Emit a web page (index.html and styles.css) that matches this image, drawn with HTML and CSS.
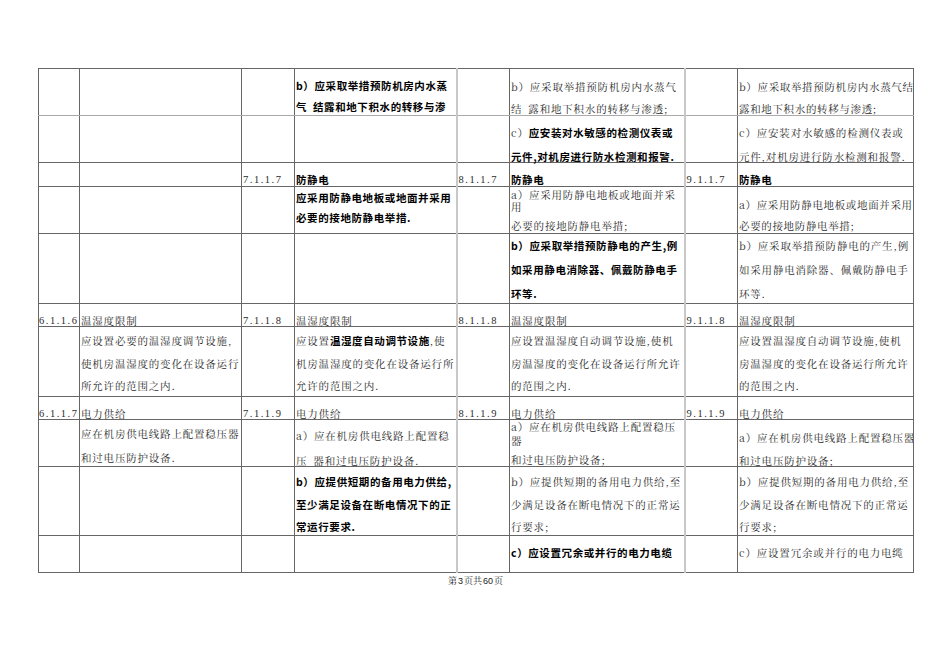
FILE: index.html
```html
<!DOCTYPE html>
<html lang="zh-CN">
<head>
<meta charset="utf-8">
<title>第3页</title>
<link rel="stylesheet" href="styles.css">
</head>
<body>
<div class="page">
  <table class="grid">
    <colgroup>
      <col class="w-num1"><col class="w-txt1"><col class="w-num"><col class="w-txt2"><col class="w-num"><col class="w-txt3"><col class="w-num"><col class="w-txt4">
    </colgroup>
    <tr class="r1">
      <td></td><td></td><td></td>
      <td><div class="c b">b）应采取举措预防机房内水蒸<br>气&ensp;结露和地下积水的转移与渗</div></td>
      <td class="soft"></td>
      <td><div class="c r1b">b）应采取举措预防机房内水蒸气<br>结&ensp;露和地下积水的转移与渗透;</div></td>
      <td class="soft"></td>
      <td><div class="c r1c tightsp">b）应采取举措预防机房内水蒸气结<br>露和地下积水的转移与渗透;</div></td>
    </tr>
    <tr class="r2">
      <td></td><td></td><td></td><td></td>
      <td class="soft"></td>
      <td><div class="c">c）<span class="b">应安装对水敏感的检测仪表或</span><br><span class="b">元件,对机房进行防水检测和报警.</span></div></td>
      <td class="soft"></td>
      <td><div class="c">c）应安装对水敏感的检测仪表或<br>元件,对机房进行防水检测和报警.</div></td>
    </tr>
    <tr class="hd r3">
      <td></td><td></td>
      <td><div class="c n">7.1.1.7</div></td>
      <td><div class="c b">防静电</div></td>
      <td class="soft"><div class="c n">8.1.1.7</div></td>
      <td><div class="c b">防静电</div></td>
      <td class="soft"><div class="c n">9.1.1.7</div></td>
      <td><div class="c b">防静电</div></td>
    </tr>
    <tr class="r4">
      <td></td><td></td><td></td>
      <td><div class="c b">应采用防静电地板或地面并采用<br>必要的接地防静电举措.</div></td>
      <td class="soft"></td>
      <td><div class="c split"><span class="ln l12">a）应采用防静电地板或地面并采</span><span class="ln l12">用</span><span class="ln l26">必要的接地防静电举措;</span></div></td>
      <td class="soft"></td>
      <td><div class="c r4c tightsp">a）应采用防静电地板或地面并采用<br>必要的接地防静电举措;</div></td>
    </tr>
    <tr class="r5">
      <td></td><td></td><td></td><td></td>
      <td class="soft"></td>
      <td><div class="c b">b）应采取举措预防静电的产生,例<br>如采用静电消除器、佩戴防静电手<br>环等.</div></td>
      <td class="soft"></td>
      <td><div class="c">b）应采取举措预防静电的产生,例<br>如采用静电消除器、佩戴防静电手<br>环等.</div></td>
    </tr>
    <tr class="hd r6">
      <td><div class="c n n1">6.1.1.6</div></td>
      <td><div class="c">温湿度限制</div></td>
      <td><div class="c n">7.1.1.8</div></td>
      <td><div class="c">温湿度限制</div></td>
      <td class="soft"><div class="c n">8.1.1.8</div></td>
      <td><div class="c">温湿度限制</div></td>
      <td class="soft"><div class="c n">9.1.1.8</div></td>
      <td><div class="c">温湿度限制</div></td>
    </tr>
    <tr class="r7">
      <td></td>
      <td><div class="c">应设置必要的温湿度调节设施,<br>使机房温湿度的变化在设备运行<br>所允许的范围之内.</div></td>
      <td></td>
      <td><div class="c">应设置<span class="b">温湿度自动调节设施</span>,使<br>机房温湿度的变化在设备运行所<br>允许的范围之内.</div></td>
      <td class="soft"></td>
      <td><div class="c">应设置温湿度自动调节设施,使机<br>房温湿度的变化在设备运行所允许<br>的范围之内.</div></td>
      <td class="soft"></td>
      <td><div class="c">应设置温湿度自动调节设施,使机<br>房温湿度的变化在设备运行所允许<br>的范围之内.</div></td>
    </tr>
    <tr class="hd r8">
      <td><div class="c n n1">6.1.1.7</div></td>
      <td><div class="c">电力供给</div></td>
      <td><div class="c n">7.1.1.9</div></td>
      <td><div class="c">电力供给</div></td>
      <td class="soft"><div class="c n">8.1.1.9</div></td>
      <td><div class="c">电力供给</div></td>
      <td class="soft"><div class="c n">9.1.1.9</div></td>
      <td><div class="c">电力供给</div></td>
    </tr>
    <tr class="r9">
      <td></td>
      <td><div class="c">应在机房供电线路上配置稳压器<br>和过电压防护设备.</div></td>
      <td></td>
      <td><div class="c r9b">a）应在机房供电线路上配置稳<br>压&ensp;器和过电压防护设备.</div></td>
      <td class="soft"></td>
      <td><div class="c split2"><span class="ln l14">a）应在机房供电线路上配置稳压</span><span class="ln l13">器</span><span class="ln l26">和过电压防护设备;</span></div></td>
      <td class="soft"></td>
      <td><div class="c r9d">a）应在机房供电线路上配置稳压器<br>和过电压防护设备;</div></td>
    </tr>
    <tr class="r10">
      <td></td><td></td><td></td>
      <td><div class="c b">b）应提供短期的备用电力供给,<br>至少满足设备在断电情况下的正<br>常运行要求.</div></td>
      <td class="soft"></td>
      <td><div class="c">b）应提供短期的备用电力供给,至<br>少满足设备在断电情况下的正常运<br>行要求;</div></td>
      <td class="soft"></td>
      <td><div class="c">b）应提供短期的备用电力供给,至<br>少满足设备在断电情况下的正常运<br>行要求;</div></td>
    </tr>
    <tr class="r11">
      <td></td><td></td><td></td><td></td>
      <td class="soft"></td>
      <td><div class="c b">c）应设置冗余或并行的电力电缆</div></td>
      <td class="soft"></td>
      <td><div class="c">c）应设置冗余或并行的电力电缆</div></td>
    </tr>
  </table>
  <div class="footer">第<span class="fn">3</span>页共<span class="fn">60</span>页</div>
</div>
</body>
</html>
```

FILE: styles.css
```css
html, body {
  margin: 0;
  padding: 0;
  background: #fff;
}

.page {
  padding: 68px 0 0 38px;
  font-family: "Noto Serif CJK SC", "Noto Sans CJK SC", serif;
  color: #2b2b2b;
}

.grid {
  border-collapse: collapse;
  table-layout: fixed;
  width: 875px;
}

.w-num1 { width: 41px; }
.w-txt1 { width: 162px; }
.w-num { width: 53px; }
.w-txt2 { width: 162px; }
.w-txt3 { width: 175px; }
.w-txt4 { width: 176px; }

.grid td {
  border: 1px solid #666;
  padding: 0;
  vertical-align: top;
}

.grid td.soft {
  border-left: 2px solid #c8c8c8;
}

.r1 td {
  border-bottom-color: #aaa;
}

.c {
  overflow-x: clip;
  overflow-y: visible;
  white-space: nowrap;
  padding-left: 1px;
  font-size: 10.5px;
  font-weight: 400;
  letter-spacing: 0.8px;
  box-sizing: border-box;
}

.c.tightsp {
  letter-spacing: 0.65px;
}

.b {
  font-family: "Noto Sans CJK SC", "Noto Sans", sans-serif;
  font-weight: 700;
  color: #000;
  letter-spacing: 0.6px;
}

.n {
  font-family: "Liberation Serif", serif;
  letter-spacing: 1.5px;
  font-weight: 400;
}

.n1 { padding-left: 0; }

/* row heights and text positions */
.r1 .c { height: 46px; line-height: 21px; padding-top: 6px; }
.r1 .r1b, .r1 .r1c { line-height: 22px; padding-top: 7px; }
.r2 .c { height: 46px; line-height: 24px; padding-top: 5px; }
.hd .c { line-height: 14px; padding-top: 10px; }
.r3 .c { height: 23px; }
.r6 .c, .r8 .c { height: 22px; }
.r4 .c { height: 46px; line-height: 20px; padding-top: 1px; }
.r4 .r4c { line-height: 21px; padding-top: 7px; }
.r4 .split { padding-top: 2px; }
.r5 .c { height: 69px; line-height: 24px; padding-top: 0; }
.r7 .c { height: 69px; line-height: 22.5px; padding-top: 3px; }
.r9 .c { height: 46px; line-height: 24px; padding-top: 2px; }
.r9 .r9b { line-height: 25px; padding-top: 3px; }
.r9 .r9d { line-height: 23px; padding-top: 6px; }
.r9 .split2 { padding-top: 0; }
.r10 .c { height: 68px; line-height: 22.5px; padding-top: 4px; }
.r11 .c { height: 36px; line-height: 22px; padding-top: 6px; }

.ln { display: block; }
.l12 { line-height: 12px; }
.l13 { line-height: 13px; }
.l14 { line-height: 14px; }
.l26 { line-height: 26px; }

.footer {
  width: 875px;
  text-align: center;
  font-size: 9px;
  line-height: 10px;
  margin-top: 3px;
  color: #222;
}

.footer .fn {
  font-family: "Liberation Sans", sans-serif;
  padding: 0 1px;
}
```
